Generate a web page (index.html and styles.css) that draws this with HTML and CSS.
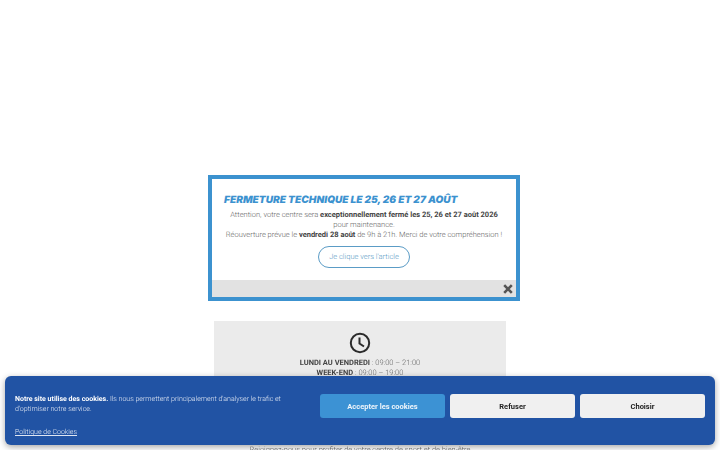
FILE: index.html
```html
<!DOCTYPE html>
<html lang="fr">
<head>
    <meta charset="UTF-8">
    <meta name="viewport" content="width=device-width, initial-scale=1.0">
    <title>Fermeture technique</title>
    <link rel="stylesheet" href="styles.css">
</head>
<body>
    <main class="page">
        <section class="hours">
            <svg class="hours-icon" width="22" height="22" viewBox="0 0 22 22" aria-hidden="true">
                <circle cx="11" cy="11" r="9.2" fill="none" stroke="#2b2b2b" stroke-width="2"/>
                <path d="M10.5 5.5V11.5L15 14.5" fill="none" stroke="#2b2b2b" stroke-width="2"/>
            </svg>
            <p><strong>LUNDI AU VENDREDI</strong> : 09:00 – 21:00</p>
            <p><strong>WEEK-END</strong> : 09:00 – 19:00</p>
        </section>
        <p class="below">Rejoignez-nous pour profiter de votre centre de sport et de bien-être</p>
    </main>

    <div class="popup">
        <div class="popup-body">
            <h2>FERMETURE TECHNIQUE LE 25, 26 ET 27 AOÛT</h2>
            <p>Attention, votre centre sera <strong>exceptionnellement fermé les 25, 26 et 27 août 2026</strong></p>
            <p>pour maintenance.</p>
            <p>Réouverture prévue le <strong>vendredi 28 août</strong> de 9h à 21h. Merci de votre compréhension !</p>
            <a class="popup-link" href="#">Je clique vers l'article</a>
        </div>
        <div class="popup-footer">
            <svg width="10" height="10" viewBox="0 0 10 10" aria-hidden="true">
                <path d="M1.2 1.2L8.8 8.8M8.8 1.2L1.2 8.8" stroke="#555" stroke-width="2.6"/>
            </svg>
        </div>
    </div>

    <div class="cookies">
        <div class="cookies-text">
            <p><strong>Notre site utilise des cookies.</strong> Ils nous permettent principalement d'analyser le trafic et d'optimiser notre service.</p>
            <a href="#">Politique de Cookies</a>
        </div>
        <div class="cookies-buttons">
            <button class="accept">Accepter les cookies</button>
            <button>Refuser</button>
            <button>Choisir</button>
        </div>
    </div>
</body>
</html>
```

FILE: styles.css
```css
html, body {
    height: 100%;
    overflow: hidden;
}
body {
    margin: 0;
    background: white;
    font-family: Roboto, "Liberation Sans", sans-serif;
    font-weight: 300;
    color: #666;
    text-rendering: geometricPrecision;
    filter: blur(0.35px);
}
p {
    margin: 0;
}
strong {
    font-weight: 700;
}
.page {
    display: flex;
    flex-direction: column;
    align-items: center;
    padding-top: 321px;
}
.hours {
    box-sizing: border-box;
    width: 292px;
    height: 120px;
    padding-top: 11px;
    background: #ebebeb;
    text-align: center;
    font-size: 7.5px;
    line-height: 10px;
}
.hours-icon {
    display: block;
    margin: 0 auto 4px;
}
.hours strong {
    color: #444;
}
.below {
    margin-top: 3px;
    font-size: 7.5px;
    line-height: 12px;
    text-align: center;
}
.popup {
    position: fixed;
    left: 208px;
    top: 175px;
    box-sizing: border-box;
    width: 312px;
    height: 126px;
    border: 4px solid #3c92cf;
    background: white;
    display: flex;
    flex-direction: column;
}
.popup-body {
    flex: 1;
    padding: 0 12px;
    text-align: center;
    font-size: 7.5px;
    line-height: 10px;
}
.popup-body h2 {
    margin: 14px 0 3px;
    text-align: left;
    color: #3c92cf;
    font-family: Inter, sans-serif;
    font-size: 10.1px;
    line-height: 14px;
    font-weight: 900;
    font-style: italic;
    white-space: nowrap;
}
.popup-body strong {
    color: #444;
}
.popup-link {
    display: block;
    box-sizing: border-box;
    width: 92px;
    height: 22px;
    margin: 6px auto 0;
    border: 1.5px solid #5b9cc6;
    border-radius: 11px;
    color: #5b9cc6;
    font-size: 7.5px;
    line-height: 19px;
    text-decoration: none;
}
.popup-footer {
    height: 17px;
    background: #e2e2e2;
    display: flex;
    align-items: center;
    justify-content: flex-end;
    padding-right: 3px;
}
.cookies {
    position: fixed;
    left: 5px;
    right: 5px;
    bottom: 5px;
    box-sizing: border-box;
    height: 69px;
    padding: 18px 10px 0;
    background: #2153a4;
    border-radius: 6px;
    box-shadow: 0 2px 6px rgba(0,0,0,0.35);
    color: #dfe6f2;
    display: flex;
    gap: 30px;
    font-size: 7px;
}
.cookies-text {
    flex: 1;
    line-height: 10px;
}
.cookies-text strong {
    color: white;
}
.cookies-text p {
    margin-bottom: 13px;
}
.cookies-text a {
    color: #dfe6f2;
}
.cookies-buttons {
    display: flex;
    gap: 5px;
}
.cookies-buttons button {
    width: 125px;
    height: 24px;
    border: none;
    border-radius: 3px;
    background: #f0f0f0;
    color: #222;
    font-family: inherit;
    font-size: 7.5px;
    font-weight: 700;
}
.cookies-buttons .accept {
    background: #3c92d4;
    color: #eef5fb;
}
```
